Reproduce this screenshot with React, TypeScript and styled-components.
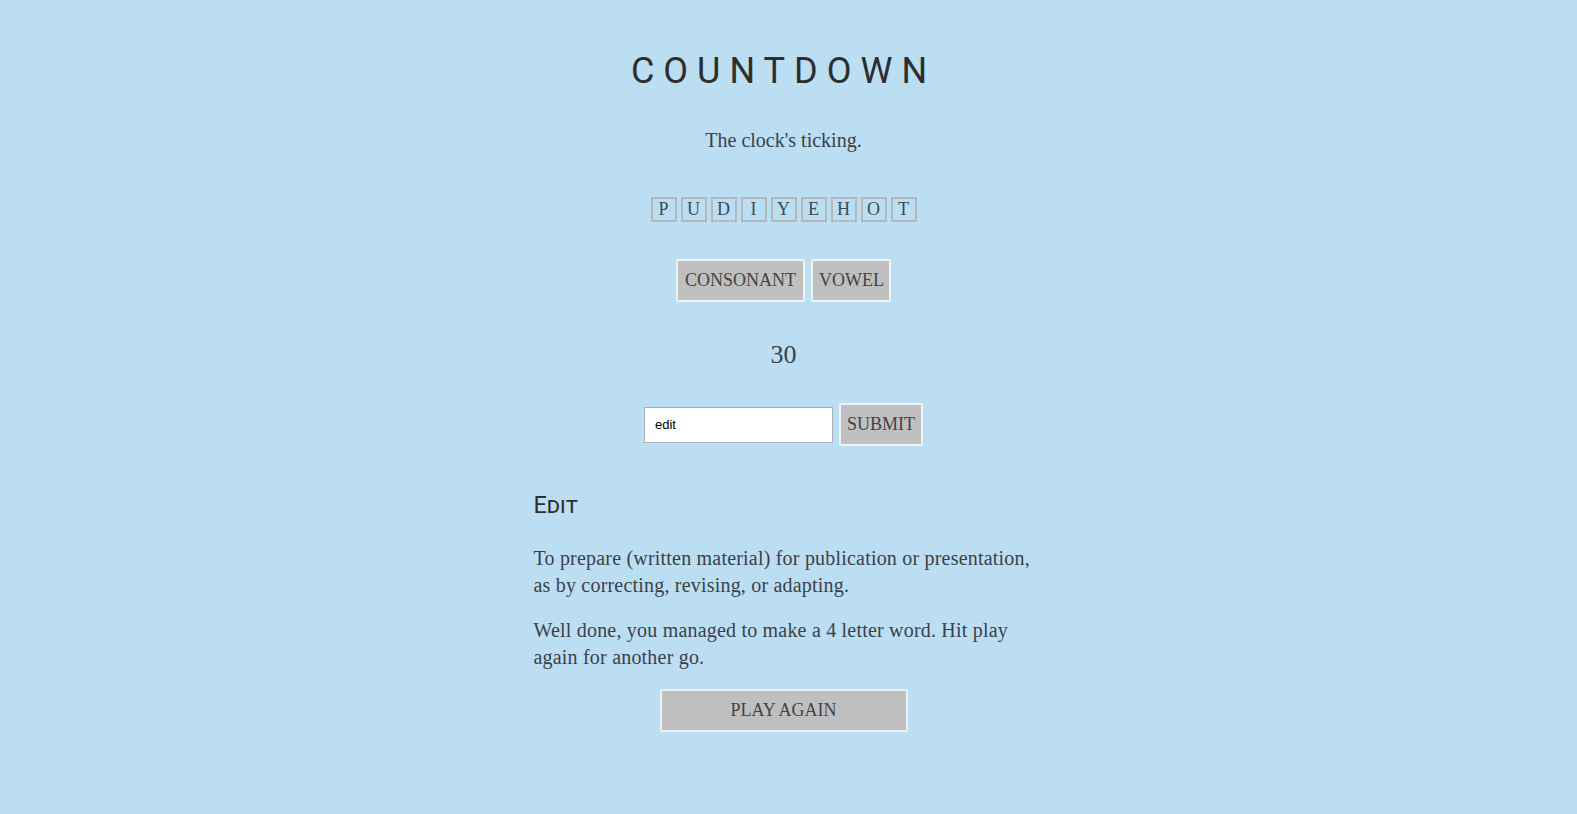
import React, { useState } from "react";
import styled, { createGlobalStyle } from "styled-components";

const GlobalStyle = createGlobalStyle`
  html, body {
    margin: 0;
    padding: 0;
    background: #bbdef2;
  }
  body {
    font-family: "Liberation Serif", "Times New Roman", serif;
    color: #3c4149;
  }
`;

const Page = styled.div`
  min-height: 814px;
  display: flex;
  flex-direction: column;
  align-items: center;
`;

const Main = styled.main`
  width: 500px;
  padding-right: 10px;
  display: flex;
  flex-direction: column;
  align-items: center;
`;

const Title = styled.h1`
  margin: 0;
  padding-top: 50px;
  font-family: Roboto, "Liberation Sans", sans-serif;
  font-weight: 400;
  font-size: 36px;
  line-height: 42px;
  letter-spacing: 9px;
  color: #2e2e2e;
`;

const Status = styled.p`
  margin: 35px 0 0;
  font-size: 20px;
  line-height: 26px;
`;

const Tiles = styled.div`
  margin-top: 44px;
  display: flex;
  gap: 4px;
`;

const Tile = styled.span`
  box-sizing: border-box;
  width: 26px;
  height: 25px;
  border: 2px solid #b3b8bc;
  display: flex;
  align-items: center;
  justify-content: center;
  font-size: 18px;
  color: #3d4a57;
`;

const Row = styled.div<{ $top: number }>`
  margin-top: ${(p) => p.$top}px;
  display: flex;
  align-items: center;
  gap: 6px;
`;

const GreyButton = styled.button<{ $width?: number }>`
  box-sizing: border-box;
  height: 43px;
  ${(p) => (p.$width ? `width: ${p.$width}px;` : "padding: 0 8px;")}
  background: #bfbfbf;
  border: 2px solid #eef2f4;
  border-radius: 2px;
  font-family: "Liberation Serif", "Times New Roman", serif;
  font-size: 18px;
  color: #444;
  text-transform: uppercase;
  cursor: pointer;
`;

const Timer = styled.div`
  margin-top: 38px;
  font-size: 26px;
  line-height: 30px;
  color: #3c4149;
`;

const WordInput = styled.input`
  box-sizing: border-box;
  width: 189px;
  height: 36px;
  padding: 0 10px;
  border: 1px solid #a9b1b7;
  background: #fff;
  font-family: Arial, "Liberation Sans", sans-serif;
  font-size: 13px;
  color: #000;
  outline: none;
`;

const Definition = styled.section`
  align-self: stretch;
  margin-top: 44px;
`;

const Word = styled.h2`
  margin: 0;
  font-family: Roboto, "Liberation Sans", sans-serif;
  font-weight: 400;
  font-size: 23.5px;
  line-height: 30px;
  font-variant: small-caps;
  color: #2e2e2e;
`;

const Text = styled.p<{ $top: number }>`
  margin: ${(p) => p.$top}px 0 0;
  font-size: 20px;
  letter-spacing: 0.2px;
  line-height: 27px;
  color: #3c4149;
`;

const letters = ["P", "U", "D", "I", "Y", "E", "H", "O", "T"];

export default function App() {
  const [word, setWord] = useState("edit");
  return (
    <Page>
      <GlobalStyle />
      <Main>
        <Title>COUNTDOWN</Title>
        <Status>The clock's ticking.</Status>
        <Tiles>
          {letters.map((l, i) => (
            <Tile key={i}>{l}</Tile>
          ))}
        </Tiles>
        <Row $top={37}>
          <GreyButton $width={129}>Consonant</GreyButton>
          <GreyButton $width={80}>Vowel</GreyButton>
        </Row>
        <Timer>30</Timer>
        <Row $top={33}>
          <WordInput value={word} onChange={(e) => setWord(e.target.value)} />
          <GreyButton $width={84}>Submit</GreyButton>
        </Row>
        <Definition>
          <Word>Edit</Word>
          <Text $top={25}>
            To prepare (written material) for publication or presentation, as
            by correcting, revising, or adapting.
          </Text>
          <Text $top={18}>
            Well done, you managed to make a 4 letter word. Hit play again for
            another go.
          </Text>
        </Definition>
        <Row $top={18}>
          <GreyButton $width={248}>Play again</GreyButton>
        </Row>
      </Main>
    </Page>
  );
}
